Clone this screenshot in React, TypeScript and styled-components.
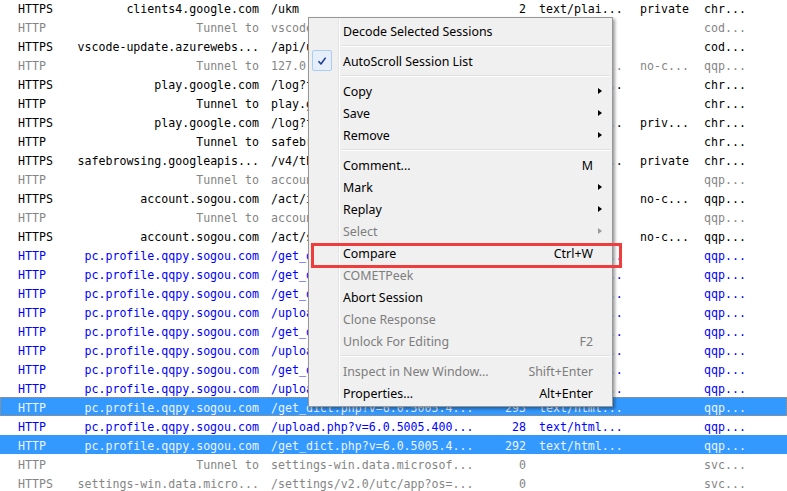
import React from "react"
import styled, { createGlobalStyle, css } from "styled-components"

const GlobalStyle = createGlobalStyle`
html, body {
  margin: 0;
  padding: 0;
  background: #ffffff;
  overflow: hidden;
}
`

type Tone = "black" | "gray" | "blue"

type Session = {
  proto: string
  host: string
  url: string
  body: string
  ctype: string
  caching: string
  process: string
  tone: Tone
  selected?: boolean
  focused?: boolean
}

const sogou = "pc.profile.qqpy.sogou.com"
const getDict = "/get_dict.php?v=6.0.5005.4..."
const upload = "/upload.php?v=6.0.5005.400..."

const sessions: Session[] = [
  { proto: "HTTPS", host: "clients4.google.com", url: "/ukm", body: "2", ctype: "text/plai...", caching: "private", process: "chr...", tone: "black" },
  { proto: "HTTP", host: "Tunnel to", url: "vscode.blob.core.windo...", body: "0", ctype: "", caching: "", process: "cod...", tone: "gray" },
  { proto: "HTTPS", host: "vscode-update.azurewebs...", url: "/api/update/win32-x64-...", body: "0", ctype: "", caching: "", process: "cod...", tone: "black" },
  { proto: "HTTP", host: "Tunnel to", url: "127.0.0.1:8888", body: "0", ctype: "text/html...", caching: "no-c...", process: "qqp...", tone: "gray" },
  { proto: "HTTPS", host: "play.google.com", url: "/log?format=json&hasfas...", body: "0", ctype: "text/plai...", caching: "", process: "chr...", tone: "black" },
  { proto: "HTTP", host: "Tunnel to", url: "play.google.com:443", body: "0", ctype: "", caching: "", process: "chr...", tone: "black" },
  { proto: "HTTPS", host: "play.google.com", url: "/log?format=json&hasfas...", body: "0", ctype: "text/plai...", caching: "priv...", process: "chr...", tone: "black" },
  { proto: "HTTP", host: "Tunnel to", url: "safebrowsing.googleapis...", body: "0", ctype: "", caching: "", process: "chr...", tone: "black" },
  { proto: "HTTPS", host: "safebrowsing.googleapis...", url: "/v4/threatListUpdates:f...", body: "0", ctype: "applicati...", caching: "private", process: "chr...", tone: "black" },
  { proto: "HTTP", host: "Tunnel to", url: "account.sogou.com:443", body: "0", ctype: "", caching: "", process: "qqp...", tone: "gray" },
  { proto: "HTTPS", host: "account.sogou.com", url: "/act/isloginv2?client_i...", body: "0", ctype: "", caching: "no-c...", process: "qqp...", tone: "black" },
  { proto: "HTTP", host: "Tunnel to", url: "account.sogou.com:443", body: "0", ctype: "", caching: "", process: "qqp...", tone: "gray" },
  { proto: "HTTPS", host: "account.sogou.com", url: "/act/sync?client_id=100...", body: "0", ctype: "", caching: "no-c...", process: "qqp...", tone: "black" },
  { proto: "HTTP", host: sogou, url: getDict, body: "292", ctype: "text/html...", caching: "", process: "qqp...", tone: "blue" },
  { proto: "HTTP", host: sogou, url: getDict, body: "292", ctype: "text/html...", caching: "", process: "qqp...", tone: "blue" },
  { proto: "HTTP", host: sogou, url: getDict, body: "293", ctype: "text/html...", caching: "", process: "qqp...", tone: "blue" },
  { proto: "HTTP", host: sogou, url: upload, body: "28", ctype: "text/html...", caching: "", process: "qqp...", tone: "blue" },
  { proto: "HTTP", host: sogou, url: getDict, body: "292", ctype: "text/html...", caching: "", process: "qqp...", tone: "blue" },
  { proto: "HTTP", host: sogou, url: upload, body: "28", ctype: "text/html...", caching: "", process: "qqp...", tone: "blue" },
  { proto: "HTTP", host: sogou, url: getDict, body: "293", ctype: "text/html...", caching: "", process: "qqp...", tone: "blue" },
  { proto: "HTTP", host: sogou, url: upload, body: "28", ctype: "text/html...", caching: "", process: "qqp...", tone: "blue" },
  { proto: "HTTP", host: sogou, url: getDict, body: "293", ctype: "text/html...", caching: "", process: "qqp...", tone: "blue", selected: true, focused: true },
  { proto: "HTTP", host: sogou, url: upload, body: "28", ctype: "text/html...", caching: "", process: "qqp...", tone: "blue" },
  { proto: "HTTP", host: sogou, url: getDict, body: "292", ctype: "text/html...", caching: "", process: "qqp...", tone: "blue", selected: true },
  { proto: "HTTP", host: "Tunnel to", url: "settings-win.data.microsof...", body: "0", ctype: "", caching: "", process: "svc...", tone: "gray" },
  { proto: "HTTPS", host: "settings-win.data.micro...", url: "/settings/v2.0/utc/app?os=...", body: "0", ctype: "", caching: "", process: "svc...", tone: "gray" },
]

const toneColor: Record<Tone, string> = {
  black: "#000000",
  gray: "#858585",
  blue: "#0000ff",
}

const Screen = styled.div`
position: relative;
width: 787px;
height: 491px;
overflow: hidden;
background: #ffffff;
`

const SessionList = styled.div`
display: flex;
flex-direction: column;
margin-top: -2px;
font-family: "DejaVu Sans Mono", "Liberation Mono", monospace;
font-size: 11.6px;
`

const Row = styled.div<{ $tone: Tone; $selected?: boolean; $focused?: boolean }>`
display: grid;
grid-template-columns: 48px 193px 219px 48px 114px 64px 1fr;
align-items: center;
box-sizing: border-box;
height: 19px;
padding: 2px 0 0 18px;
white-space: nowrap;
color: ${(p) => toneColor[p.$tone]};
${(p) =>
    p.$selected &&
    css`
background: #3399ff;
color: #eef3ff;
`}
${(p) =>
    p.$focused &&
    css`
outline: 1px dotted #c98a4b;
outline-offset: -1px;
`}
`

const Cell = styled.span<{ $align?: "left" | "right"; $pad?: number }>`
overflow: hidden;
text-align: ${(p) => p.$align || "left"};
padding-left: ${(p) => p.$pad || 0}px;
`

const Menu = styled.div`
position: absolute;
left: 308px;
top: 17px;
width: 305px;
box-sizing: border-box;
padding: 2px;
background: #f0f0f0;
border: 1px solid #979797;
box-shadow: 2px 2px 3px rgba(0, 0, 0, 0.38);
font-family: "Noto Sans", "Open Sans", sans-serif;
font-size: 12.4px;
display: flex;
flex-direction: column;
`

const Item = styled.div<{ $disabled?: boolean }>`
display: grid;
grid-template-columns: 28px 1fr auto 17px;
align-items: center;
height: 22px;
color: ${(p) => (p.$disabled ? "#7d7d7d" : "#000000")};
`

const Gutter = styled.div`
position: relative;
align-self: stretch;
border-right: 1px solid #e2e3e3;
box-shadow: 1px 0 0 #ffffff;
`

const Label = styled.span`
padding-left: 4px;
white-space: nowrap;
`

const Shortcut = styled.span`
white-space: nowrap;
`

const Arrow = styled.span<{ $disabled?: boolean }>`
justify-self: start;
margin-left: 5px;
width: 0;
height: 0;
border-top: 3.5px solid transparent;
border-bottom: 3.5px solid transparent;
border-left: 4px solid ${(p) => (p.$disabled ? "#9a9a9a" : "#000000")};
`

const CheckBox = styled.div`
position: absolute;
left: 1px;
top: 0;
width: 20px;
height: 21px;
box-sizing: border-box;
border: 1px solid #aecbf0;
border-radius: 2px;
background: #e6eefa;
display: flex;
align-items: center;
justify-content: center;
`

const Separator = styled.div`
display: grid;
grid-template-columns: 28px 1fr;
height: 8px;
`

const SeparatorLine = styled.div`
align-self: center;
margin-left: 2px;
border-top: 1px solid #e0e0e0;
border-bottom: 1px solid #ffffff;
`

const Annotation = styled.div`
position: absolute;
left: 311px;
top: 243px;
width: 311px;
height: 25px;
box-sizing: border-box;
border: 3px solid #ef3c3c;
pointer-events: none;
`

type MenuEntry =
  | { sep: true }
  | { label: string; shortcut?: string; sub?: boolean; disabled?: boolean; checked?: boolean; sep?: false }

const menu: MenuEntry[] = [
  { label: "Decode Selected Sessions" },
  { sep: true },
  { label: "AutoScroll Session List", checked: true },
  { sep: true },
  { label: "Copy", sub: true },
  { label: "Save", sub: true },
  { label: "Remove", sub: true },
  { sep: true },
  { label: "Comment...", shortcut: "M" },
  { label: "Mark", sub: true },
  { label: "Replay", sub: true },
  { label: "Select", sub: true, disabled: true },
  { label: "Compare", shortcut: "Ctrl+W" },
  { label: "COMETPeek", disabled: true },
  { label: "Abort Session" },
  { label: "Clone Response", disabled: true },
  { label: "Unlock For Editing", shortcut: "F2", disabled: true },
  { sep: true },
  { label: "Inspect in New Window...", shortcut: "Shift+Enter", disabled: true },
  { label: "Properties...", shortcut: "Alt+Enter" },
]

function Check() {
  return (
    <svg width="10" height="10" viewBox="0 0 10 10">
      <path d="M1.5 5.2 L4 8 L8.6 1.6" fill="none" stroke="#1c3f94" strokeWidth="1.6" strokeLinejoin="round" />
    </svg>
  )
}

function ContextMenu() {
  return (
    <Menu>
      {menu.map((m, i) =>
        m.sep ? (
          <Separator key={i}>
            <Gutter />
            <SeparatorLine />
          </Separator>
        ) : (
          <Item key={i} $disabled={m.disabled}>
            <Gutter>
              {m.checked ? (
                <CheckBox>
                  <Check />
                </CheckBox>
              ) : null}
            </Gutter>
            <Label>{m.label}</Label>
            <Shortcut>{m.shortcut || ""}</Shortcut>
            {m.sub ? <Arrow $disabled={m.disabled} /> : <span />}
          </Item>
        )
      )}
    </Menu>
  )
}

export default function App() {
  return (
    <>
      <GlobalStyle />
      <Screen>
        <SessionList>
          {sessions.map((s, i) => (
            <Row key={i} $tone={s.tone} $selected={s.selected} $focused={s.focused}>
              <Cell>{s.proto}</Cell>
              <Cell $align="right">{s.host}</Cell>
              <Cell $pad={12}>{s.url}</Cell>
              <Cell $align="right">{s.body}</Cell>
              <Cell $pad={13}>{s.ctype}</Cell>
              <Cell>{s.caching}</Cell>
              <Cell>{s.process}</Cell>
            </Row>
          ))}
        </SessionList>
        <ContextMenu />
        <Annotation />
      </Screen>
    </>
  )
}
